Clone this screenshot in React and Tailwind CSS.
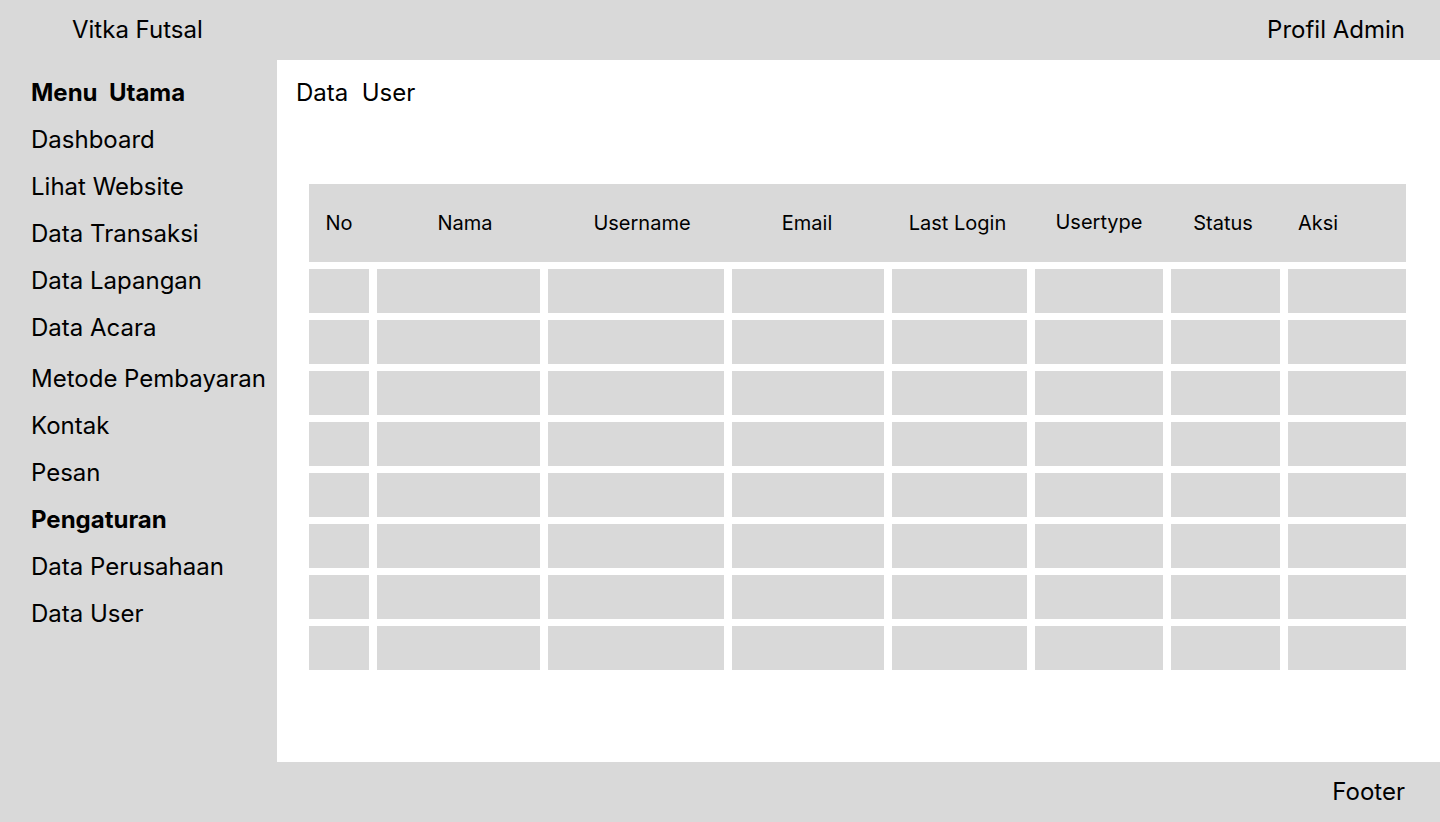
import React from 'react';

const MENU = [
  { label: 'Menu  Utama', bold: true },
  { label: 'Dashboard' },
  { label: 'Lihat Website' },
  { label: 'Data Transaksi' },
  { label: 'Data Lapangan' },
  { label: 'Data Acara' },
  { label: 'Metode Pembayaran', gap: true },
  { label: 'Kontak' },
  { label: 'Pesan' },
  { label: 'Pengaturan', bold: true },
  { label: 'Data Perusahaan' },
  { label: 'Data User' },
];

const COLUMNS = [
  { label: 'No', cls: 'justify-center' },
  { label: 'Nama', cls: 'justify-center pl-[13px]' },
  { label: 'Username', cls: 'justify-center pl-[12px]' },
  { label: 'Email', cls: 'justify-center pr-[2px]' },
  { label: 'Last Login', cls: 'justify-center pr-[4px]' },
  { label: 'Usertype', cls: 'justify-center -translate-y-px' },
  { label: 'Status', cls: 'justify-center pr-[5px]' },
  { label: 'Aksi', cls: 'justify-start pl-[10px]' },
];

const GRID = 'grid grid-cols-[60px_163px_176px_152px_135px_128px_109px_118px] gap-x-2';

const rows = Array.from({ length: 8 }, (_, i) => i);

const App = () => {
  return (
    <div className="w-[1440px] h-[822px] flex flex-col bg-[#d9d9d9] text-black font-['Inter',sans-serif]">
      <header className="h-[60px] shrink-0 flex items-center justify-between pl-[72px] pr-[35px] text-[24px]">
        <span>Vitka Futsal</span>
        <span>Profil Admin</span>
      </header>

      <div className="flex flex-1 min-h-0">
        <aside className="w-[277px] shrink-0 pl-[31px] pt-[9px] flex flex-col">
          {MENU.map((item) => (
            <div
              key={item.label}
              className={`h-[47px] flex items-center text-[24px] whitespace-pre ${item.bold ? 'font-bold' : ''} ${item.gap ? 'mt-[4px]' : ''}`}
            >
              {item.label}
            </div>
          ))}
        </aside>

        <main className="flex-1 bg-white pl-[19px] pt-[9px]">
          <div className="h-[47px] flex items-center text-[24px] whitespace-pre">Data  User</div>

          <div className="ml-[13px] mt-[68px] w-[1097px]">
            <div className={`${GRID} h-[78px] bg-[#d9d9d9] text-[20px]`}>
              {COLUMNS.map((col) => (
                <div key={col.label} className={`flex items-center ${col.cls}`}>
                  {col.label}
                </div>
              ))}
            </div>

            <div className="mt-[7px] flex flex-col gap-[7px]">
              {rows.map((r) => (
                <div key={r} className={GRID}>
                  {COLUMNS.map((col) => (
                    <div key={col.label} className="h-[44px] bg-[#d9d9d9]" />
                  ))}
                </div>
              ))}
            </div>
          </div>
        </main>
      </div>

      <footer className="h-[60px] shrink-0 flex items-center justify-end pr-[35px] text-[24px]">
        Footer
      </footer>
    </div>
  );
};

export default App;
